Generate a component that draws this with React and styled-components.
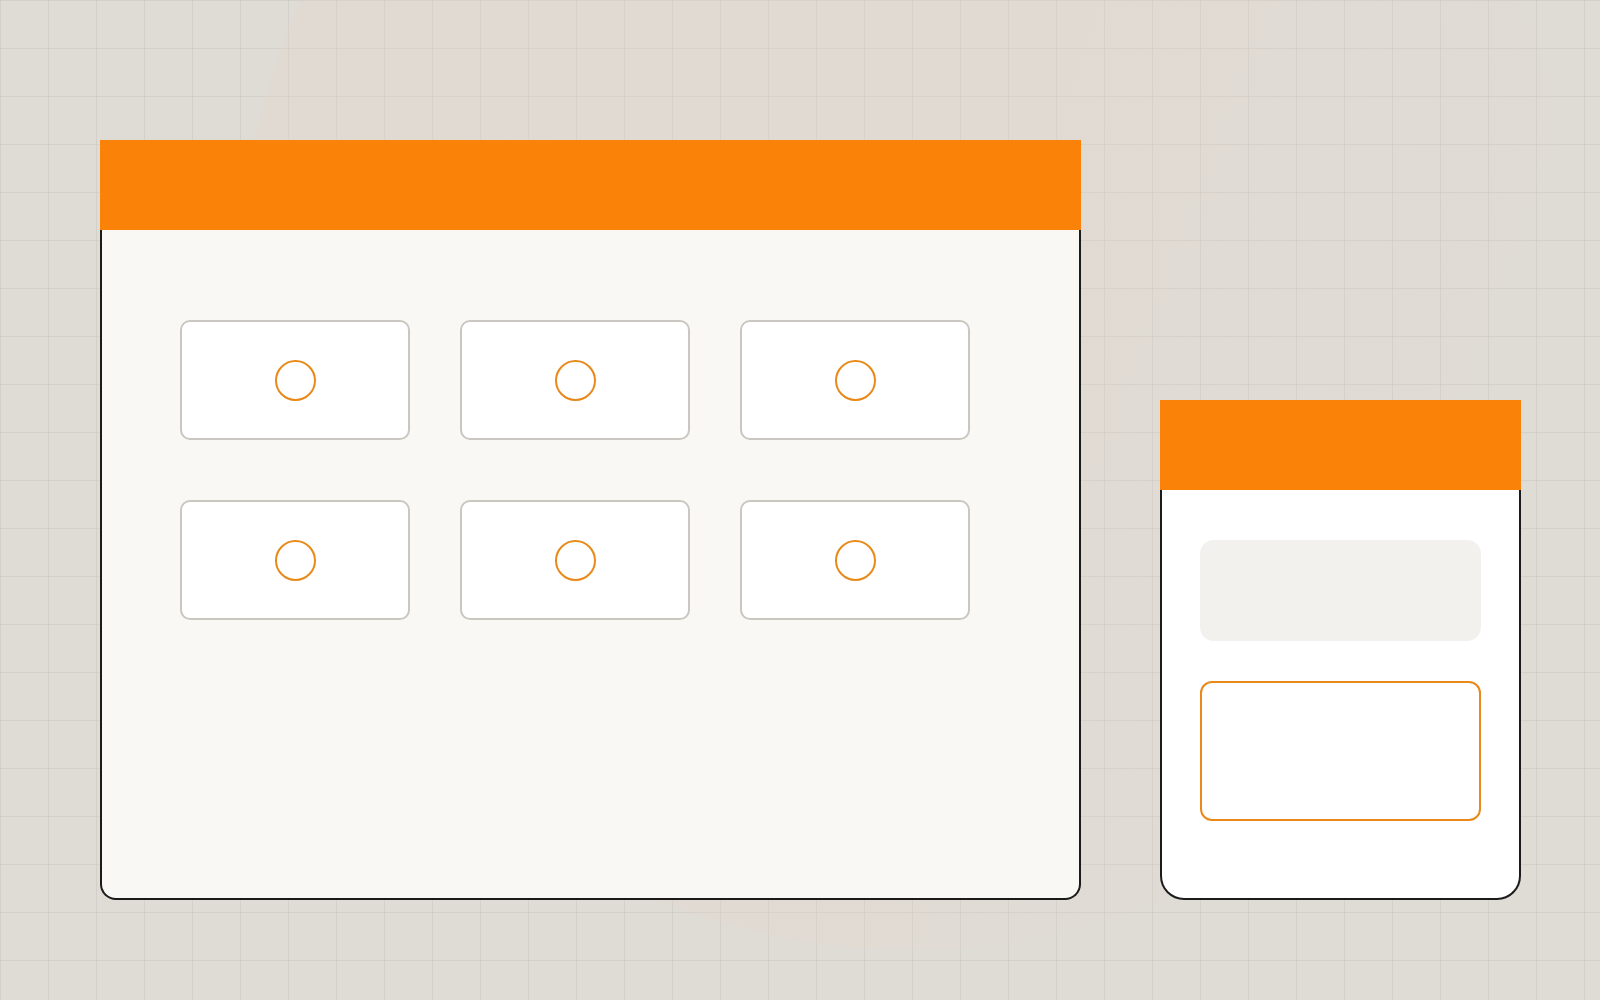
import React from "react";
import styled, { createGlobalStyle } from "styled-components";

const Global = createGlobalStyle`
  html, body { margin: 0; padding: 0; }
  body { font-family: "Liberation Sans", Arial, sans-serif; background: #dfdcd6; }
  * { box-sizing: border-box; }
`;

const Page = styled.div`
  position: relative;
  width: 1600px;
  height: 1000px;
  overflow: hidden;
  background-color: #dfdcd6;
  background-image:
    linear-gradient(to right, rgba(200, 196, 190, 0.5) 1px, transparent 1px),
    linear-gradient(to bottom, rgba(200, 196, 190, 0.5) 1px, transparent 1px);
  background-size: 48px 48px;
  background-position: 0 0;
`;

const Blob = styled.div`
  position: absolute;
  left: 240px;
  top: -390px;
  width: 1340px;
  height: 1340px;
  border-radius: 50%;
  background: linear-gradient(
    110deg,
    rgba(228, 212, 198, 0.28) 0%,
    rgba(228, 212, 198, 0.24) 55%,
    rgba(228, 212, 198, 0.06) 85%,
    rgba(228, 212, 198, 0) 100%
  );
  pointer-events: none;
`;

const Stage = styled.div`
  position: relative;
  display: flex;
  align-items: flex-end;
  gap: 79px;
  padding: 140px 0 0 100px;
  height: 900px;
`;

const Window = styled.div`
  display: flex;
  flex-direction: column;
  width: ${(p) => p.$w}px;
  height: ${(p) => p.$h}px;
`;

const Header = styled.div`
  height: 90px;
  flex: none;
  background: #fa8208;
`;

const Body = styled.div`
  flex: 1;
  background: ${(p) => p.$bg};
  border: 2px solid #1b1b1b;
  border-top: none;
  border-radius: 0 0 ${(p) => p.$r}px ${(p) => p.$r}px;
`;

const Grid = styled.div`
  display: grid;
  grid-template-columns: repeat(3, 230px);
  grid-auto-rows: 120px;
  column-gap: 50px;
  row-gap: 60px;
  padding: 90px 0 0 78px;
`;

const Card = styled.div`
  background: #ffffff;
  border: 2px solid #cac7c1;
  border-radius: 10px;
  display: flex;
  align-items: center;
  justify-content: center;
`;

const Ring = styled.div`
  width: 41px;
  height: 41px;
  border-radius: 50%;
  border: 2.5px solid #e8891a;
`;

const Stack = styled.div`
  display: flex;
  flex-direction: column;
  gap: 40px;
  padding: 50px 38px 0 38px;
`;

const Placeholder = styled.div`
  height: 101px;
  background: #f3f1ee;
  border-radius: 14px;
`;

const Outlined = styled.div`
  height: 140px;
  background: #ffffff;
  border: 2.5px solid #e8891a;
  border-radius: 12px;
`;

export default function App() {
  return (
    <>
      <Global />
      <Page>
        <Blob />
        <Stage>
          <Window $w={981} $h={760}>
            <Header />
            <Body $bg="#f9f8f5" $r={16}>
              <Grid>
                {Array.from({ length: 6 }).map((_, i) => (
                  <Card key={i}>
                    <Ring />
                  </Card>
                ))}
              </Grid>
            </Body>
          </Window>
          <Window $w={361} $h={500}>
            <Header />
            <Body $bg="#ffffff" $r={24}>
              <Stack>
                <Placeholder />
                <Outlined />
              </Stack>
            </Body>
          </Window>
        </Stage>
      </Page>
    </>
  );
}
